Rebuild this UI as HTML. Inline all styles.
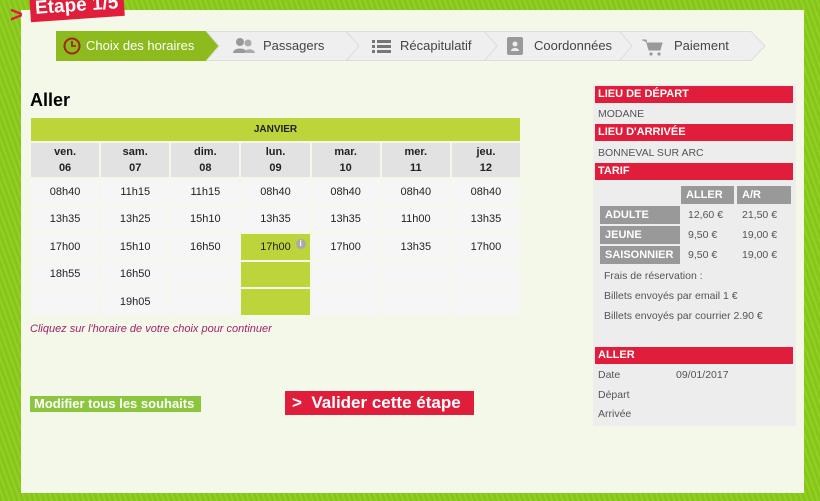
<!DOCTYPE html>
<html><head><meta charset="utf-8"><style>
*{margin:0;padding:0;box-sizing:border-box}
body{width:820px;height:501px;overflow:hidden;background:#86c618;background-image:repeating-linear-gradient(70deg,#86c618 0 3px,#93cf26 3px 5px);font-family:"Liberation Sans",Arial,sans-serif;position:relative}
#panel{position:absolute;left:21px;top:10px;width:783px;height:483px;background:#f4f8e8}
.etape{position:absolute;left:30px;top:-7px;background:#e01e3c;color:#fff;font-weight:bold;font-size:19px;padding:2px 6px 2px 5px;transform:rotate(-4deg);white-space:nowrap}
.chev{position:absolute;left:10px;top:2px;color:#e01e3c;font-weight:bold;font-size:22px}
.tabs{position:absolute;left:56px;top:31px;height:30px}
.tab{position:absolute;top:0;height:30px;font-size:13px;color:#444;line-height:30px}
.tab svg{position:absolute;top:0;left:0}
.tab span{position:absolute;top:0;white-space:nowrap}
h1{position:absolute;left:30px;top:90px;font-size:18px;font-weight:bold;color:#000}
table.cal{position:absolute;left:29px;top:116px;border-collapse:separate;border-spacing:2px;width:493px}
.cal td{background:#f6f6f6;text-align:center;font-size:11px;color:#222;height:25.5px;width:68px;padding:0}
.cal td.m{background:#bdd43a;font-weight:bold;font-size:10px;height:23px}
.cal td.d{background:#e2e2e2;font-weight:bold;font-size:11px;height:34px;line-height:16px}
.cal td.g{background:#bdd43a;position:relative}
.info{position:absolute;right:4px;top:5px;width:10px;height:10px;border-radius:50%;background:#aaa;color:#fff;font-size:8px;line-height:10px;font-weight:bold}
.hint{position:absolute;left:30px;top:323px;font-size:11px;font-style:italic;color:#a0226f}
.mod{position:absolute;left:30px;top:396px;background:#8cc63f;color:#fff;font-weight:bold;font-size:13px;padding:0 4px;height:16px;line-height:16px;width:171px;white-space:nowrap}
.val{position:absolute;left:285px;top:391px;width:189px;height:24px;background:#e01e3c;color:#fff;font-weight:bold;font-size:17px;line-height:23px;padding-left:7px;white-space:nowrap}
.side{position:absolute;left:593px;top:84px;width:203px;height:342px;background:#ededed}
.rb{position:absolute;left:595px;width:198px;height:17px;background:#e01e3c;color:#fff;font-weight:bold;font-size:11px;line-height:17px;padding-left:3px}
.st{position:absolute;font-size:10.5px;color:#555}
.gh{position:absolute;background:#999;color:#fff;font-weight:bold;font-size:11px;line-height:18px;padding-left:5px;height:18px}
</style></head><body>
<div id="panel"></div>
<div class="chev">&gt;</div>
<div class="etape">Étape 1/5</div>

<div class="tabs">
 <div class="tab" style="left:0;width:170px">
  <svg width="170" height="30"><polygon points="0,0 150,0 163,15 150,30 0,30" fill="#8dba1c"/></svg>
  <svg width="22" height="30" style="left:6px"><circle cx="10" cy="15" r="7.5" fill="none" stroke="#9b2b10" stroke-width="2"/><path d="M10 10v5h4" stroke="#9b2b10" stroke-width="1.8" fill="none"/></svg>
  <span style="left:30px;color:#fff;font-size:13px">Choix des horaires</span>
 </div>
 <div class="tab" style="left:150px;width:160px">
  <svg width="160" height="30"><polygon points="0.5,0.5 140,0.5 154,15 140,29.5 0.5,29.5 13,15" fill="#efefef" stroke="#ddd"/></svg>
  <svg width="30" height="30" style="left:24px"><circle cx="10" cy="11" r="4" fill="#999"/><path d="M3 22c0-6 14-6 14 0z" fill="#999"/><circle cx="18" cy="12" r="3.5" fill="#aaa"/><path d="M14 22c1-5 10-5 11 0z" fill="#aaa"/></svg>
  <span style="left:57px">Passagers</span>
 </div>
 <div class="tab" style="left:290px;width:160px">
  <svg width="160" height="30"><polygon points="0.5,0.5 140,0.5 154,15 140,29.5 0.5,29.5 13,15" fill="#efefef" stroke="#ddd"/></svg>
  <svg width="24" height="30" style="left:26px"><g fill="#777"><rect x="0" y="9" width="3" height="3"/><rect x="5" y="9" width="14" height="3"/><rect x="0" y="14" width="3" height="3"/><rect x="5" y="14" width="14" height="3"/><rect x="0" y="19" width="3" height="3"/><rect x="5" y="19" width="14" height="3"/></g></svg>
  <span style="left:54px">Récapitulatif</span>
 </div>
 <div class="tab" style="left:428px;width:160px">
  <svg width="160" height="30"><polygon points="0.5,0.5 137,0.5 151,15 137,29.5 0.5,29.5 13,15" fill="#efefef" stroke="#ddd"/></svg>
  <svg width="24" height="30" style="left:22px"><rect x="1" y="6" width="16" height="18" rx="2" fill="#999"/><circle cx="9" cy="13" r="2.5" fill="#eee"/><path d="M5 20c0-4 8-4 8 0z" fill="#eee"/></svg>
  <span style="left:50px">Coordonnées</span>
 </div>
 <div class="tab" style="left:563px;width:160px">
  <svg width="160" height="30"><polygon points="0.5,0.5 132,0.5 146,15 132,29.5 0.5,29.5 13,15" fill="#efefef" stroke="#ddd"/></svg>
  <svg width="26" height="30" style="left:22px"><path d="M1 9h4l3 10h11l2-7H7" fill="#999" stroke="#999" stroke-width="1"/><circle cx="10" cy="23" r="1.6" fill="#999"/><circle cx="18" cy="23" r="1.6" fill="#999"/></svg>
  <span style="left:55px">Paiement</span>
 </div>
</div>

<h1>Aller</h1>
<table class="cal">
<tr><td class="m" colspan="7">JANVIER</td></tr>
<tr><td class="d">ven.<br>06</td><td class="d">sam.<br>07</td><td class="d">dim.<br>08</td><td class="d">lun.<br>09</td><td class="d">mar.<br>10</td><td class="d">mer.<br>11</td><td class="d">jeu.<br>12</td></tr>
<tr><td>08h40</td><td>11h15</td><td>11h15</td><td>08h40</td><td>08h40</td><td>08h40</td><td>08h40</td></tr>
<tr><td>13h35</td><td>13h25</td><td>15h10</td><td>13h35</td><td>13h35</td><td>11h00</td><td>13h35</td></tr>
<tr><td>17h00</td><td>15h10</td><td>16h50</td><td class="g">17h00<span class="info">i</span></td><td>17h00</td><td>13h35</td><td>17h00</td></tr>
<tr><td>18h55</td><td>16h50</td><td></td><td class="g"></td><td></td><td></td><td></td></tr>
<tr><td></td><td>19h05</td><td></td><td class="g"></td><td></td><td></td><td></td></tr>
</table>
<div class="hint">Cliquez sur l'horaire de votre choix pour continuer</div>
<div class="mod">Modifier tous les souhaits</div>
<div class="val">&gt;&nbsp; Valider cette étape</div>

<div class="side"></div>
<div class="rb" style="top:86px">LIEU DE DÉPART</div>
<div class="st" style="left:598px;top:108px">MODANE</div>
<div class="rb" style="top:124px">LIEU D'ARRIVÉE</div>
<div class="st" style="left:598px;top:147px">BONNEVAL SUR ARC</div>
<div class="rb" style="top:163px">TARIF</div>
<div class="gh" style="left:681px;top:186px;width:53px">ALLER</div>
<div class="gh" style="left:737px;top:186px;width:54px">A/R</div>
<div class="gh" style="left:600px;top:206px;width:80px">ADULTE</div>
<div class="gh" style="left:600px;top:226px;width:80px">JEUNE</div>
<div class="gh" style="left:600px;top:246px;width:80px">SAISONNIER</div>
<div class="st" style="left:688px;top:209px">12,60 €</div><div class="st" style="left:742px;top:209px">21,50 €</div>
<div class="st" style="left:688px;top:229px">9,50 €</div><div class="st" style="left:742px;top:229px">19,00 €</div>
<div class="st" style="left:688px;top:249px">9,50 €</div><div class="st" style="left:742px;top:249px">19,00 €</div>
<div class="st" style="left:604px;top:270px">Frais de réservation :</div>
<div class="st" style="left:604px;top:290px">Billets envoyés par email 1 €</div>
<div class="st" style="left:604px;top:310px">Billets envoyés par courrier 2.90 €</div>
<div class="rb" style="top:347px">ALLER</div>
<div class="st" style="left:598px;top:369px">Date</div><div class="st" style="left:676px;top:369px">09/01/2017</div>
<div class="st" style="left:598px;top:389px">Départ</div>
<div class="st" style="left:598px;top:408px">Arrivée</div>
</body></html>
